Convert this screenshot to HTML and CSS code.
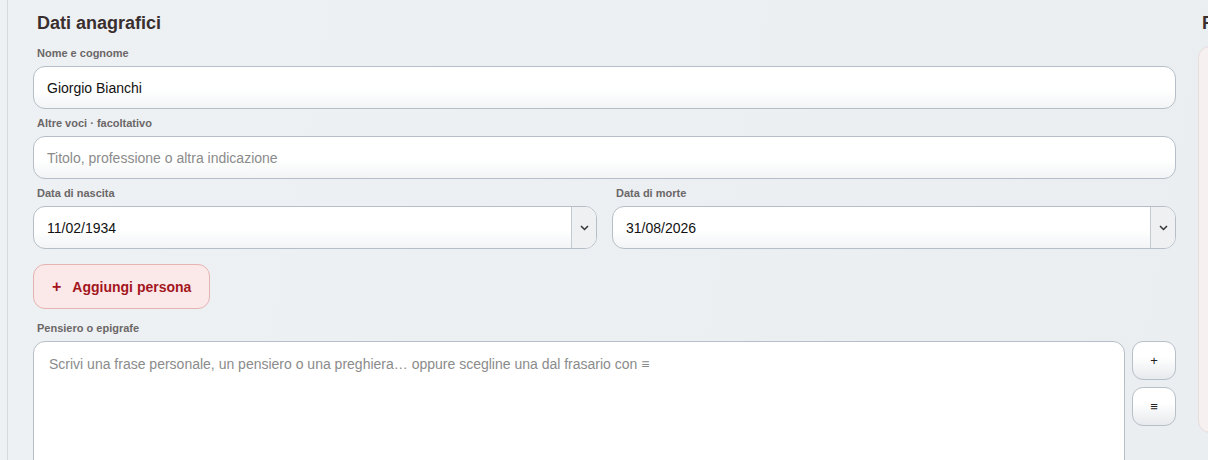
FILE: index.html
```html
<!DOCTYPE html>
<html lang="it">
<head>
    <meta charset="UTF-8">
    <meta name="viewport" content="width=device-width, initial-scale=1.0">
    <title>Dati anagrafici</title>
    <link rel="stylesheet" href="styles.css">
</head>
<body>
    <div class="panel">
        <section class="left">
            <h2 class="section-title">Dati anagrafici</h2>

            <div class="field">
                <label>Nome e cognome</label>
                <input type="text" class="text-input" value="Giorgio Bianchi">
            </div>
            <div class="field">
                <label>Altre voci · facoltativo</label>
                <input type="text" class="text-input" placeholder="Titolo, professione o altra indicazione">
            </div>

            <div class="field date-row">
                <div>
                    <label>Data di nascita</label>
                    <div class="select">
                        <span class="select-value">11/02/1934</span>
                        <span class="select-arrow">
                            <svg width="9" height="6" viewBox="0 0 9 6"><polyline points="1,1 4.5,4.5 8,1" fill="none" stroke="#333" stroke-width="1.5"/></svg>
                        </span>
                    </div>
                </div>
                <div>
                    <label>Data di morte</label>
                    <div class="select">
                        <span class="select-value">31/08/2026</span>
                        <span class="select-arrow">
                            <svg width="9" height="6" viewBox="0 0 9 6"><polyline points="1,1 4.5,4.5 8,1" fill="none" stroke="#333" stroke-width="1.5"/></svg>
                        </span>
                    </div>
                </div>
            </div>

            <button class="btn-add" type="button"><span class="plus">+</span> Aggiungi persona</button>

            <div class="field">
                <label>Pensiero o epigrafe</label>
                <div class="epigraph">
                    <textarea class="text-area" placeholder="Scrivi una frase personale, un pensiero o una preghiera… oppure scegline una dal frasario con ≡"></textarea>
                    <div class="side-tools">
                        <button class="tool-btn" type="button">+</button>
                        <button class="tool-btn" type="button">≡</button>
                    </div>
                </div>
            </div>
        </section>

        <section class="right">
            <h2 class="section-title">Foto</h2>
            <div class="photo-card"></div>
        </section>
    </div>
</body>
</html>
```

FILE: styles.css
```css
html, body {
    overflow: hidden;
}

body {
    margin: 0;
    background: #eef1f3;
    font-family: "Liberation Sans", Arial, sans-serif;
    color: #1a1a1a;
}

.panel {
    margin: -20px 0 0 7px;
    padding: 31px 0 0 25px;
    width: 1600px;
    height: 600px;
    border: 1px solid #d5d8dd;
    border-radius: 14px;
    background: linear-gradient(100deg, #eef1f4 0%, #e9edf0 100%);
    display: grid;
    grid-template-columns: 1143px 320px;
    gap: 22px;
    align-items: start;
}

.section-title {
    margin: 0 0 12px;
    padding-left: 4px;
    font-size: 18px;
    line-height: 22px;
    font-weight: bold;
    color: #3a2f2f;
}

.field {
    margin-bottom: 7px;
}

label {
    display: block;
    padding-left: 4px;
    margin-bottom: 6px;
    font-size: 11px;
    line-height: 14px;
    font-weight: bold;
    color: #6b6767;
}

.text-input {
    display: block;
    box-sizing: border-box;
    width: 100%;
    height: 43px;
    padding: 0 13px;
    border: 1px solid #b6bfc7;
    border-radius: 12px;
    background: linear-gradient(180deg, #ffffff 55%, #f2f4f6 100%);
    font-family: inherit;
    font-size: 14px;
    color: #111;
    outline: none;
}

.text-input::placeholder, .text-area::placeholder {
    color: #8b8b8b;
}

.date-row {
    display: grid;
    grid-template-columns: 1fr 1fr;
    gap: 15px;
}

.select {
    display: flex;
    box-sizing: border-box;
    height: 43px;
    border: 1px solid #b6bfc7;
    border-radius: 12px;
    background: linear-gradient(180deg, #ffffff 55%, #f2f4f6 100%);
    overflow: hidden;
}

.select-value {
    flex: 1;
    display: flex;
    align-items: center;
    padding-left: 13px;
    font-size: 14px;
    color: #111;
}

.select-arrow {
    width: 24px;
    display: flex;
    align-items: center;
    justify-content: center;
    border-left: 1px solid #c3cad0;
    background: #eef0f2;
}

.btn-add {
    display: flex;
    align-items: center;
    gap: 11px;
    margin: 15px 0 12px;
    height: 45px;
    padding: 0 18px;
    border: 1px solid #e6b3b3;
    border-radius: 12px;
    background: #fbe8e8;
    color: #a3151d;
    font-family: inherit;
    font-size: 14px;
    font-weight: bold;
}

.btn-add .plus {
    font-size: 16px;
    font-weight: bold;
    line-height: 1;
}

.epigraph {
    display: flex;
    gap: 7px;
}

.text-area {
    flex: 1;
    box-sizing: border-box;
    height: 150px;
    padding: 13px 15px;
    border: 1px solid #b6bfc7;
    border-radius: 12px;
    background: #fff;
    font-family: inherit;
    font-size: 14px;
    line-height: 18px;
    resize: none;
    outline: none;
}

.side-tools {
    display: flex;
    flex-direction: column;
    gap: 7px;
}

.tool-btn {
    width: 44px;
    height: 39px;
    border: 1px solid #b8c0c7;
    border-radius: 11px;
    background: linear-gradient(180deg, #ffffff 40%, #e7eaed 100%);
    font-family: inherit;
    font-size: 13px;
    color: #222;
    padding: 0;
}

.photo-card {
    height: 387px;
    box-sizing: border-box;
    border: 1px solid #e6dcdc;
    border-radius: 12px;
    background: #f6f0f0;
}
```
